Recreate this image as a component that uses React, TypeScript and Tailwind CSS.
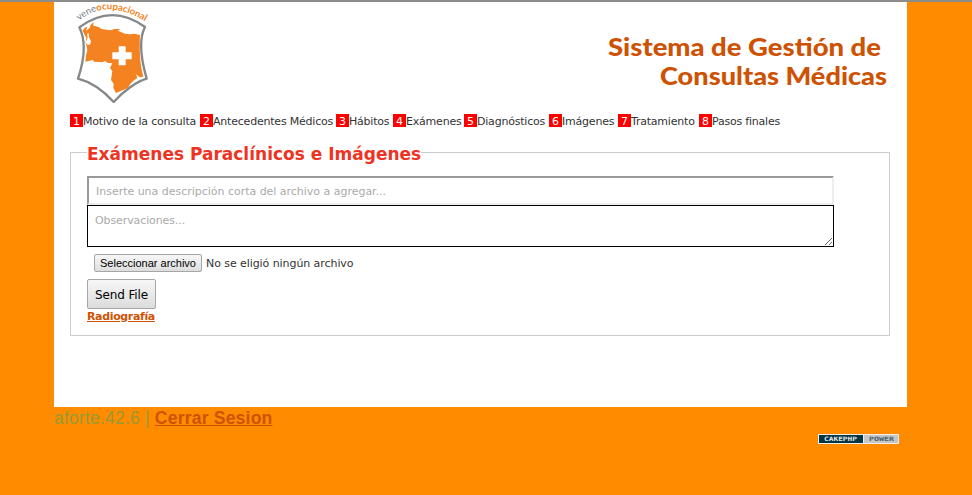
const steps = [
  { name: 'Motivo de la consulta', width: 'w-[130px]' },
  { name: 'Antecedentes Médicos', width: 'w-[136px]' },
  { name: 'Hábitos', width: 'w-[57px]' },
  { name: 'Exámenes', width: 'w-[71px]' },
  { name: 'Diagnósticos', width: 'w-[85px]' },
  { name: 'Imágenes', width: 'w-[69px]' },
  { name: 'Tratamiento', width: 'w-[81px]' },
  { name: 'Pasos finales', width: 'w-[84px]' },
];

function Logo() {
  return (
    <svg className="ml-[18px] h-[110px] w-[80px] shrink-0 overflow-visible" viewBox="66 0 240 330">
      <defs>
        <path id="arc" d="M88 62 Q176 -14 312 81" />
      </defs>
      <path
        d="M88 82 Q186 9 285 81 C263 123 275 184 290 236 C260 245 221 272 191 306 C160 272 120 245 84 236 C101 185 112 130 88 82Z"
        fill="white"
        stroke="#858789"
        strokeWidth="7"
        strokeLinejoin="round"
      />
      <path
        d="M98 92 L104 83 L112 80 L108 92 L119 84 L121 76 L130 66 L130 77 L144 80 L155 87 L181 91 L194 87 L211 87 L204 92 L225 101 L240 103 L254 101 L270 105 C268 145 269 190 280 230 L270 232 L258 223 L262 234 L250 242 L239 254 L234 264 L198 279 L190 263 L191 251 L183 240 L187 213 L180 204 L187 190 L174 189 L165 183 L157 187 L132 185 L128 180 L119 182 L106 185 L108 166 L112 151 L110 139 L107 128 L109 114 L104 105Z"
        fill="#f58220"
      />
      <path d="M111 101 L116 99 L117 112 L123 124 L120 134 L112 134 L107 127 L113 114Z" fill="white" />
      <path d="M206 139h21v18h18v21h-18v18h-21v-18h-19v-21h19z" fill="white" />
      <text fontFamily="Lato, sans-serif" fontSize="28.5" fontWeight="500">
        <textPath href="#arc">
          <tspan fill="#858789">vene</tspan>
          <tspan fill="#f58220" fontWeight="700">ocupacional</tspan>
        </textPath>
      </text>
    </svg>
  );
}

function Title() {
  return (
    <svg
      className="mt-7 mr-[18px] h-[70px] w-[284px] overflow-visible"
      viewBox="605 28 284 70"
      fill="#ce5203"
      fontFamily="Lato, sans-serif"
      fontWeight="900"
      fontSize="25.5"
    >
      <text x="608" y="56" textLength="273" lengthAdjust="spacingAndGlyphs">Sistema de Gestión de</text>
      <text x="660" y="85" textLength="227" lengthAdjust="spacingAndGlyphs">Consultas Médicas</text>
    </svg>
  );
}

export default function App() {
  return (
    <div className="h-[495px] overflow-hidden border-t-2 border-[#8c8c8c] bg-[#ff8c00] font-['DejaVu_Sans',sans-serif] text-[#333]">
      <main className="ml-[54px] flex h-[405px] w-[853px] flex-col bg-white">
        <header className="-mt-0.5 flex h-[114px] shrink-0 items-start justify-between">
          <Logo />
          <Title />
        </header>
        <nav className="ml-4 flex h-[13px] shrink-0 text-[11px] leading-[15px] tracking-[-0.21px] whitespace-nowrap">
          {steps.map((step, i) => (
            <span key={step.name} className={`flex shrink-0 ${step.width}`}>
              <b className="h-[13px] w-[13px] shrink-0 bg-[red] text-center font-normal text-white">{i + 1}</b>
              <span>{step.name}</span>
            </span>
          ))}
        </nav>
        <fieldset className="mt-[15px] ml-4 h-[194px] w-[820px] shrink-0 border border-[#ccc] pl-4">
          <legend className="h-[21px] pt-px text-[17px] leading-[22px] font-bold whitespace-nowrap text-[#ee3322]">
            Exámenes Paraclínicos e Imágenes
          </legend>
          <input
            className="mt-[13px] block h-[29px] w-[747px] border-2 border-t-[#999] border-r-[#eee] border-b-[#eee] border-l-[#999] px-[7px] pt-0.5 text-[11px] tracking-[-0.02px] placeholder:text-[#aaa]"
            placeholder="Inserte una descripción corta del archivo a agregar..."
          />
          <textarea
            className="block h-[42px] w-[747px] resize border border-black px-[7px] pt-2 text-[11px] leading-[14px] tracking-[-0.1px] placeholder:text-[#aaa]"
            placeholder="Observaciones..."
          />
          <div className="mt-[7px] ml-[7px] flex h-[18px] items-center text-[11px]">
            <button className="h-[18px] w-[108px] rounded-[2px] border border-[#a6a6a6] bg-gradient-to-b from-[#f7f7f7] to-[#dedede] font-['Liberation_Sans',sans-serif] text-[11px] leading-4 whitespace-nowrap text-black">
              Seleccionar archivo
            </button>
            <span className="ml-1 pt-0.5 tracking-[-0.07px]">No se eligió ningún archivo</span>
          </div>
          <button className="mt-[7px] block h-[30px] w-[69px] rounded-[2px] border border-[#a6a6a6] bg-gradient-to-b from-[#f7f7f7] to-[#dcdcdc] pt-0.5 text-xs tracking-[-0.1px] whitespace-nowrap text-black">
            Send File
          </button>
          <a href="#" className="block w-[68px] pt-px text-[11px] leading-[14px] font-bold tracking-[-0.35px] whitespace-nowrap text-[#ce5203] underline">
            Radiografía
          </a>
        </fieldset>
      </main>
      <footer className="ml-[54px] w-[853px] font-['Liberation_Sans',sans-serif]">
        <p className="h-[27px] text-[17.6px] leading-[23px] tracking-[0.17px] whitespace-nowrap text-[#999933]">
          aforte.42.6 |{' '}
          <a href="#" className="font-bold text-[#ce5203] underline">Cerrar Sesion</a>
        </p>
        <svg className="mr-2 ml-auto h-2.5 w-[81px]" viewBox="0 0 81 10" fontFamily="'DejaVu Sans Mono', monospace" fontSize="6" fontWeight="700">
          <path fill="#eee" d="M0 0h81v10H0z" />
          <path fill="#003543" d="M1 1h44v8H1z" />
          <path fill="#c6c6c6" d="M46 1h34v8H46z" />
          <text x="6" y="7.2" fill="#e6eaea" textLength="33" lengthAdjust="spacingAndGlyphs">CAKEPHP</text>
          <text x="51" y="7.2" fill="#42606a" textLength="25" lengthAdjust="spacingAndGlyphs">POWER</text>
        </svg>
      </footer>
    </div>
  );
}
